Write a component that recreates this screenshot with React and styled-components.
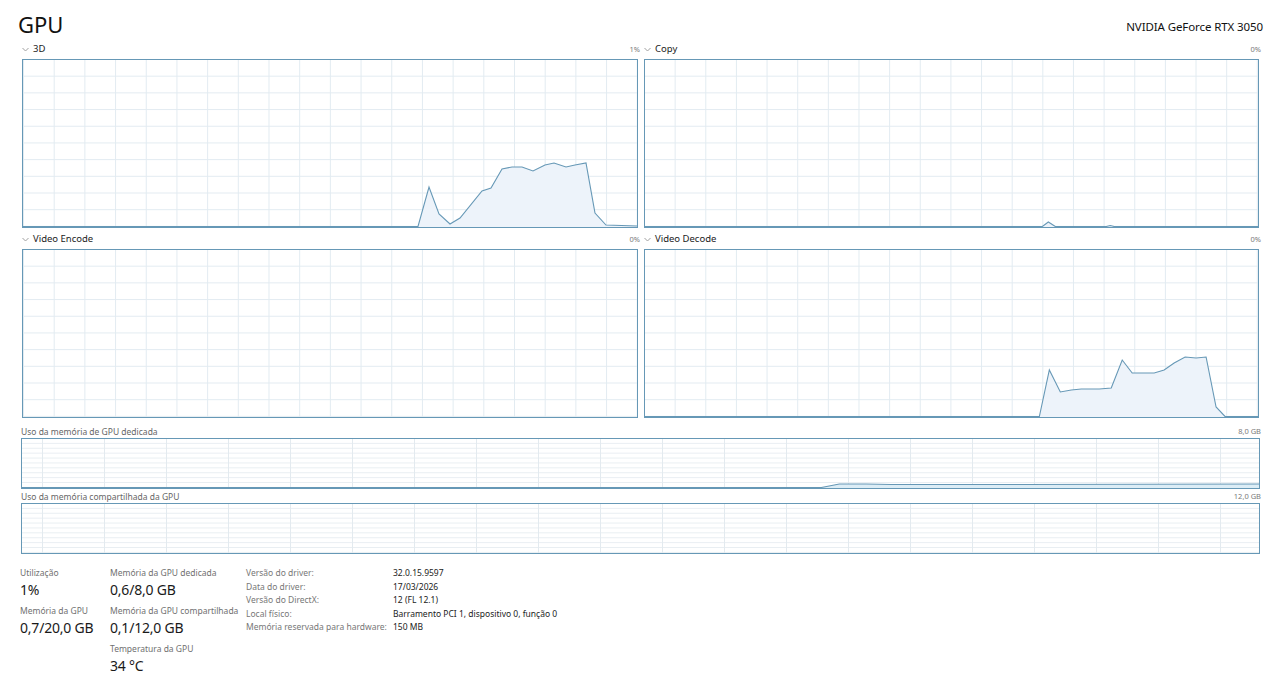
import React from "react"
import styled, { createGlobalStyle } from "styled-components"

const GlobalStyle = createGlobalStyle`
  html, body {
    margin: 0;
    padding: 0;
    background: #fff;
  }
  body {
    font-family: "Noto Sans", "Open Sans", sans-serif;
    color: #1a1a1a;
  }
`

const LINE = "#6698b6"
const FILL = "#edf3fa"
const GRID = "#e2ebf1"

const engines = [
  {
    name: "3D",
    value: "1%",
    points: [[0, 166.5], [395, 166.5], [406, 127], [416, 154], [427, 164], [437, 158], [459, 131], [468, 128], [479, 109], [489, 107], [499, 107], [510, 111], [522, 105], [531, 103], [543, 107], [552, 105], [563, 103], [572, 153], [583, 165], [614, 166]],
    gridOffset: 0,
  },
  {
    name: "Copy",
    value: "0%",
    points: [[0, 166.5], [398, 166.5], [404, 162], [411, 166.5], [462, 166.5], [466, 165.5], [470, 166.5], [614, 166.5]],
    gridOffset: -1,
  },
  {
    name: "Video Encode",
    value: "0%",
    points: [],
    gridOffset: 0,
  },
  {
    name: "Video Decode",
    value: "0%",
    points: [[0, 166.5], [395, 166.5], [405, 120], [416, 142], [427, 140], [437, 139], [455, 139], [467, 138], [478, 110], [488, 123], [510, 123], [520, 120], [530, 113], [541, 107], [552, 108], [562, 107], [572, 157], [581, 166.5], [614, 166.5]],
    gridOffset: -1,
  },
]

const memory = [
  {
    name: "Uso da memória de GPU dedicada",
    value: "8,0 GB",
    points: [[0, 48.5], [800, 48.5], [818, 45], [845, 45], [870, 45.5], [1000, 45.5], [1238, 45]],
  },
  {
    name: "Uso da memória compartilhada da GPU",
    value: "12,0 GB",
    points: [],
  },
]

const stats = [
  [
    { label: "Utilização", value: "1%" },
    { label: "Memória da GPU", value: "0,7/20,0 GB" },
  ],
  [
    { label: "Memória da GPU dedicada", value: "0,6/8,0 GB" },
    { label: "Memória da GPU compartilhada", value: "0,1/12,0 GB" },
    { label: "Temperatura da GPU", value: "34 °C" },
  ],
]

const details = [
  ["Versão do driver:", "32.0.15.9597"],
  ["Data do driver:", "17/03/2026"],
  ["Versão do DirectX:", "12 (FL 12.1)"],
  ["Local físico:", "Barramento PCI 1, dispositivo 0, função 0"],
  ["Memória reservada para hardware:", "150 MB"],
]

const Chevron = () => (
  <svg width="7" height="5" viewBox="0 0 7 5">
    <path d="M0.5 1 L3.5 4 L6.5 1" fill="none" stroke="#a0a0a0" strokeWidth="1" />
  </svg>
)

const Chart = ({ points, w, h, fill = FILL }) => {
  if (!points.length) return null
  const line = points.map(p => p.join(",")).join(" ")
  const area = `0,${h} ${line} ${w},${h}`
  return (
    <svg width="100%" height="100%" viewBox={`0 0 ${w} ${h}`} preserveAspectRatio="none">
      <polygon points={area} fill={fill} />
      <polyline points={line} fill="none" stroke={LINE} strokeWidth="1.1" />
    </svg>
  )
}

const App = () => (
  <Page>
    <GlobalStyle />
    <Header>
      <Title>GPU</Title>
      <Device>NVIDIA GeForce RTX 3050</Device>
    </Header>

    <Engines>
      {engines.map(e => (
        <Engine key={e.name}>
          <EngineHead>
            <EngineName><Chevron />{e.name}</EngineName>
            <Small>{e.value}</Small>
          </EngineHead>
          <Graph cols={20} rows={10} offset={e.gridOffset}>
            <Chart points={e.points} w={614} h={167} />
          </Graph>
        </Engine>
      ))}
    </Engines>

    {memory.map((m, i) => (
      <Memory key={m.name} first={i === 0}>
        <MemoryHead>
          <MemoryName>{m.name}</MemoryName>
          <Small>{m.value}</Small>
        </MemoryHead>
        <MemGraph>
          <Chart points={m.points} w={1238} h={49} fill="#dcedf6" />
        </MemGraph>
      </Memory>
    ))}

    <Footer>
      {stats.map((col, i) => (
        <StatCol key={i} wide={i === 1}>
          {col.map(s => (
            <Stat key={s.label}>
              <StatLabel>{s.label}</StatLabel>
              <StatValue>{s.value}</StatValue>
            </Stat>
          ))}
        </StatCol>
      ))}
      <Details>
        {details.map(([k, v]) => (
          <React.Fragment key={k}>
            <DetailKey>{k}</DetailKey>
            <DetailValue>{v}</DetailValue>
          </React.Fragment>
        ))}
      </Details>
    </Footer>
  </Page>
)

export default App

const Page = styled.div`
  width: 1280px;
  height: 677px;
  box-sizing: border-box;
  padding: 0 20px 0 21px;
  overflow: hidden;
`
const Header = styled.div`
  height: 38px;
  display: flex;
  justify-content: space-between;
  align-items: flex-start;
`
const Title = styled.div`
  margin-top: 9px;
  margin-left: -3px;
  font-size: 22px;
  line-height: 30px;
  color: #111;
`
const Device = styled.div`
  margin-top: 19px;
  margin-right: -3px;
  font-size: 11.5px;
  line-height: 16px;
  letter-spacing: -0.1px;
  color: #111;
`
const Engines = styled.div`
  display: grid;
  grid-template-columns: 616px 615px;
  column-gap: 6px;
  margin-left: 1px;
`
const Engine = styled.div`
  display: flex;
  flex-direction: column;
`
const EngineHead = styled.div`
  height: 21px;
  display: flex;
  justify-content: space-between;
  align-items: center;
  margin-right: -2px;
`
const EngineName = styled.div`
  display: flex;
  align-items: center;
  gap: 4px;
  font-size: 9.5px;
  color: #222;
  svg { margin-top: 1px; }
`
const Small = styled.div`
  font-size: 7.5px;
  color: #7a7a7a;
`
const Graph = styled.div`
  height: 169px;
  box-sizing: border-box;
  border: 1px solid ${LINE};
  background-color: #fff;
  background-image:
    linear-gradient(to right, ${GRID} 1px, transparent 1px),
    linear-gradient(to bottom, ${GRID} 1px, transparent 1px);
  background-size: ${p => 100 / p.cols}% ${p => 100 / p.rows}%;
  background-position: ${p => p.offset}px -1px;
  svg { display: block; }
`
const Memory = styled.div`
  margin-top: ${p => (p.first ? "6px" : "0")};
`
const MemoryHead = styled.div`
  height: 14px;
  display: flex;
  justify-content: space-between;
  align-items: center;
  margin-right: -1px;
`
const MemoryName = styled.div`
  font-size: 8.5px;
  color: #666;
`
const MemGraph = styled.div`
  height: 51px;
  box-sizing: border-box;
  border: 1px solid ${LINE};
  background-image:
    linear-gradient(to right, #e3eaef 1px, transparent 1px),
    linear-gradient(to bottom, #e9eef2 1px, transparent 1px);
  background-size: 62px 10%;
  background-position: 20px -1px;
  svg { display: block; }
`
const Footer = styled.div`
  display: flex;
  margin-top: 12px;
  margin-left: -1px;
`
const StatCol = styled.div`
  width: ${p => (p.wide ? "136px" : "90px")};
  display: flex;
  flex-direction: column;
`
const Stat = styled.div`
  height: 38px;
`
const StatLabel = styled.div`
  font-size: 8.5px;
  line-height: 13px;
  color: #707070;
`
const StatValue = styled.div`
  font-size: 14px;
  line-height: 22px;
  letter-spacing: -0.2px;
  color: #1a1a1a;
`
const Details = styled.div`
  display: grid;
  grid-template-columns: 147px auto;
  grid-auto-rows: 13.5px;
  align-items: center;
  font-size: 8.5px;
`
const DetailKey = styled.div`
  color: #777;
`
const DetailValue = styled.div`
  color: #222;
`
